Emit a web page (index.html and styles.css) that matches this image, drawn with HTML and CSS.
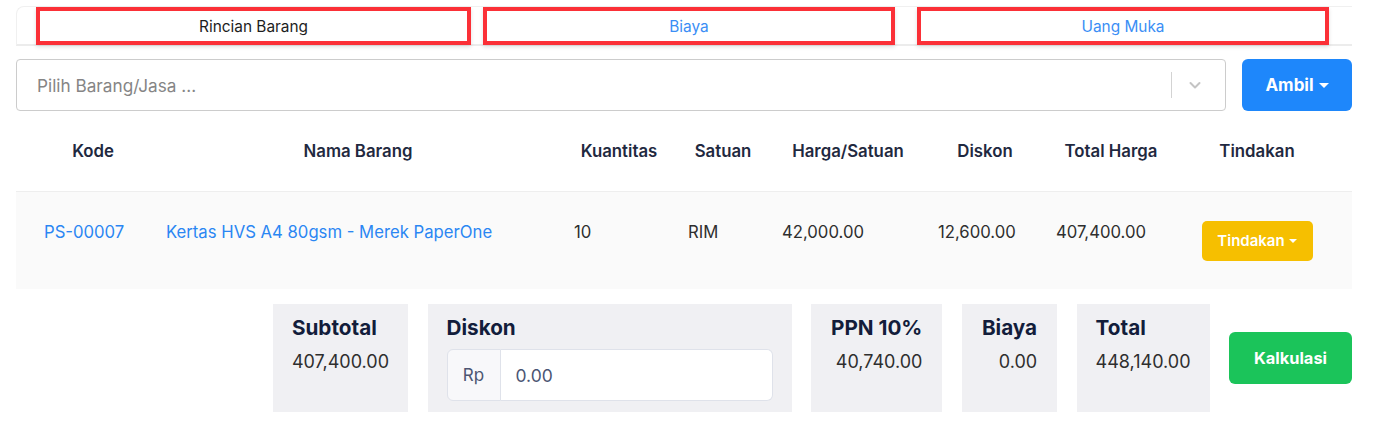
FILE: index.html
```html
<!DOCTYPE html>
<html>
<head>
<meta charset="utf-8">
<link rel="stylesheet" href="styles.css">
</head>
<body>
<div class="page">
  <div class="tabs">
    <div class="tab tab-1 active">Rincian Barang</div>
    <div class="tab tab-2">Biaya</div>
    <div class="tab tab-3">Uang Muka</div>
  </div>

  <div class="picker">
    <div class="select">
      <span class="placeholder">Pilih Barang/Jasa ...</span>
      <span class="sep"></span>
      <svg class="chev" width="14" height="14" viewBox="0 0 14 14"><path d="M2.5 5 L7 9.5 L11.5 5" fill="none" stroke="#c4c4c4" stroke-width="2" stroke-linecap="round" stroke-linejoin="round"/></svg>
    </div>
    <button class="btn-ambil">Ambil <span class="caret"></span></button>
  </div>

  <div class="table">
    <div class="thead">
      <div class="th">Kode</div>
      <div class="th">Nama Barang</div>
      <div class="th">Kuantitas</div>
      <div class="th">Satuan</div>
      <div class="th">Harga/Satuan</div>
      <div class="th">Diskon</div>
      <div class="th">Total Harga</div>
      <div class="th">Tindakan</div>
    </div>
    <div class="trow">
      <div class="td link">PS-00007</div>
      <div class="td link">Kertas HVS A4 80gsm - Merek PaperOne</div>
      <div class="td">10</div>
      <div class="td">RIM</div>
      <div class="td">42,000.00</div>
      <div class="td">12,600.00</div>
      <div class="td">407,400.00</div>
      <div class="td center"><button class="btn-tindakan">Tindakan <span class="caret small"></span></button></div>
    </div>
  </div>

  <div class="totals">
    <div class="box">
      <div class="label">Subtotal</div>
      <div class="value">407,400.00</div>
    </div>
    <div class="box box-diskon">
      <div class="label">Diskon</div>
      <div class="input-group">
        <span class="addon">Rp</span>
        <span class="input">0.00</span>
      </div>
    </div>
    <div class="box right">
      <div class="label">PPN 10%</div>
      <div class="value">40,740.00</div>
    </div>
    <div class="box right">
      <div class="label">Biaya</div>
      <div class="value">0.00</div>
    </div>
    <div class="box">
      <div class="label">Total</div>
      <div class="value">448,140.00</div>
    </div>
    <div class="calc-wrap">
      <button class="btn-kalkulasi">Kalkulasi</button>
    </div>
  </div>
</div>
</body>
</html>
```

FILE: styles.css
```css
* { box-sizing: border-box; }
html, body { margin: 0; padding: 0; background: #fff; }
body {
  font-family: Inter, "Noto Sans", "Liberation Sans", sans-serif;
  color: #333;
  width: 1377px;
  height: 431px;
  overflow: hidden;
}
.page { padding: 6px 25px 0 16px; }

.tabs {
  display: flex;
  height: 40px;
  border: 1px solid #f0f0f0;
  border-bottom: 2px solid #ececec;
  border-right: none;
  border-radius: 8px 0 0 0;
  padding-left: 19px;
}
.tab {
  height: 38px;
  border: 4px solid #fb3037;
  box-shadow: 0 2px 4px rgba(0,0,0,0.12);
  display: flex;
  align-items: center;
  justify-content: center;
  font-size: 15.4px;
  color: #3a8ef5;
  background: #fff;
}
.tab.active { color: #1d1d1d; }
.tab-1 { width: 435px; }
.tab-2 { width: 412px; margin-left: 12px; }
.tab-3 { width: 412px; margin-left: 22px; }

.picker {
  display: flex;
  margin-top: 13px;
  gap: 16px;
}
.select {
  flex: 1;
  height: 52px;
  border: 1px solid #cccccc;
  border-radius: 4px;
  display: flex;
  align-items: center;
  padding-left: 20px;
}
.placeholder { flex: 1; font-size: 17.2px; color: #858585; }
.sep { width: 1px; height: 26px; background: #d3d3d3; }
.chev { margin: 0 23px 0 16px; }
.btn-ambil {
  width: 110px;
  height: 52px;
  border: none;
  border-radius: 6px;
  background: #1e87fb;
  color: #fff;
  font-family: inherit;
  font-size: 17px;
  font-weight: 700;
  display: flex;
  align-items: center;
  justify-content: center;
  gap: 5px;
}
.caret {
  display: inline-block;
  width: 0; height: 0;
  border-left: 5px solid transparent;
  border-right: 5px solid transparent;
  border-top: 5px solid #fff;
}
.caret.small {
  border-left-width: 4px;
  border-right-width: 4px;
  border-top-width: 4px;
}

.thead, .trow {
  display: grid;
  grid-template-columns: 122px 408px 114px 94px 156px 118px 134px 158px;
  padding: 0 16px;
}
.thead { height: 80px; align-items: center; }
.th {
  text-align: center;
  font-size: 16.8px;
  font-weight: 600;
  color: #1f2940;
  white-space: nowrap;
}
.trow {
  height: 98px;
  align-items: center;
  background: #fafafa;
  border-top: 1px solid #eeeeee;
}
.td {
  font-size: 16.7px;
  color: #2e2e2e;
  padding-left: 12px;
  padding-bottom: 17px;
  white-space: nowrap;
}
.td.link { color: #2a86f3; }
.td.center { display: flex; justify-content: center; padding-left: 0; padding-bottom: 0; }
.btn-tindakan {
  width: 111px;
  height: 40px;
  border: none;
  border-radius: 5px;
  background: #f6bf00;
  color: #fff;
  font-family: inherit;
  font-size: 15px;
  font-weight: 600;
  display: flex;
  align-items: center;
  justify-content: center;
  gap: 4px;
}

.totals {
  display: flex;
  justify-content: flex-end;
  gap: 19.5px;
  margin-top: 15px;
}
.box {
  background: #f0f0f3;
  height: 108px;
  padding: 12px 19px 0 19px;
}
.box.right { text-align: right; padding-left: 20px; padding-right: 20px; }
.label {
  font-size: 20.7px;
  font-weight: 700;
  color: #131d3b;
  line-height: 24px;
  white-space: nowrap;
}
.value {
  margin-top: 11px;
  font-size: 18px;
  color: #2e2e2e;
  line-height: 22px;
  white-space: nowrap;
}
.box-diskon { width: 364px; }
.input-group {
  display: flex;
  margin-top: 9px;
  height: 52px;
}
.addon {
  width: 54px;
  border: 1px solid #dfe2ea;
  border-radius: 6px 0 0 6px;
  background: #f8f8fa;
  display: flex;
  align-items: center;
  justify-content: center;
  font-size: 17px;
  color: #4c5672;
}
.input {
  flex: 1;
  border: 1px solid #dfe2ea;
  border-left: none;
  border-radius: 0 6px 6px 0;
  background: #fff;
  display: flex;
  align-items: center;
  padding-left: 15px;
  font-size: 17.5px;
  color: #4a5574;
}
.calc-wrap { display: flex; align-items: flex-start; padding-top: 28px; }
.btn-kalkulasi {
  width: 123px;
  height: 52px;
  border: none;
  border-radius: 6px;
  background: #1bc45a;
  color: #fff;
  font-family: inherit;
  font-size: 16.4px;
  font-weight: 700;
}
```
